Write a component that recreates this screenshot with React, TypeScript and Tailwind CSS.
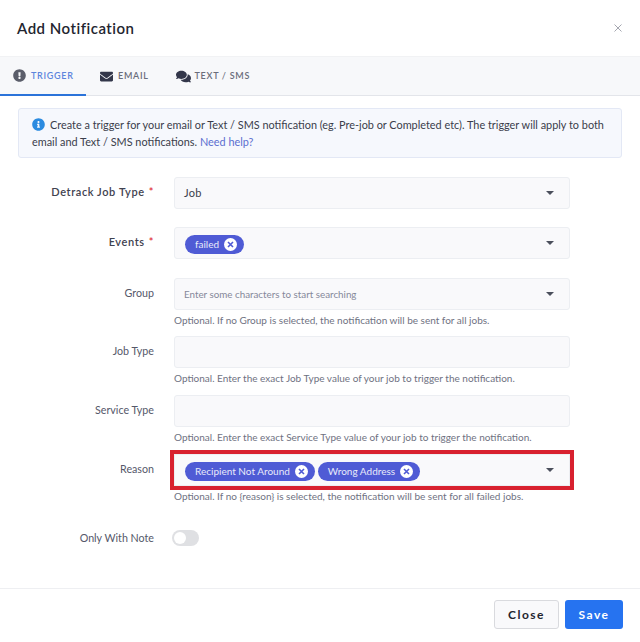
import { FaComments, FaEnvelope, FaExclamationCircle, FaInfoCircle } from "react-icons/fa";

function Caret() {
  return (
    <svg width="8" height="4" viewBox="0 0 8 4" className="shrink-0">
      <path d="M0 0h8L4 4z" fill="#4b4f5c" />
    </svg>
  );
}

function Chip({ label }: { label: string }) {
  return (
    <span className="flex h-[19px] items-center gap-[5px] rounded-full bg-[#4f5bd5] pl-[10px] pr-[7px] text-[10px] text-[#e8eafa]">
      {label}
      <span className="flex h-[13px] w-[13px] items-center justify-center rounded-full bg-white">
        <svg width="7" height="7" viewBox="0 0 7 7">
          <path d="M1 1l5 5M6 1L1 6" stroke="#4f5bd5" strokeWidth="1.6" />
        </svg>
      </span>
    </span>
  );
}

function Field({
  children,
  caret,
  highlight,
}: {
  children?: React.ReactNode;
  caret?: boolean;
  highlight?: boolean;
}) {
  return (
    <div
      className={`flex h-[32px] items-center justify-between border border-[#eceef2] bg-[#f9f9fb] pl-[9px] pr-[15px] ${
        highlight ? "rounded-none outline-[4px] outline-[#d8212f]" : "rounded-[3px]"
      }`}
    >
      <div className="flex items-center gap-[3px]">{children}</div>
      {caret && <Caret />}
    </div>
  );
}

function Row({
  label,
  required,
  help,
  children,
  className,
}: {
  label: string;
  required?: boolean;
  help?: string;
  children: React.ReactNode;
  className?: string;
}) {
  return (
    <div className={`flex ${className ?? ""}`}>
      <div
        className={`w-[154px] shrink-0 pt-[7px] text-right ${
          required ? "text-[11px] font-semibold tracking-[0.6px] text-[#3f4250]" : "text-[10.7px] text-[#55586a]"
        }`}
      >
        {label}
        {required && <span className="ml-[4px] text-[#e0323c]">*</span>}
      </div>
      <div className="ml-[20px] w-[396px]">
        {children}
        {help && <p className="mt-[4px] text-[10px] leading-[12px] text-[#6f7282]">{help}</p>}
      </div>
    </div>
  );
}

export default function App() {
  return (
    <div className="flex h-[642px] w-[640px] flex-col bg-white font-['Lato',sans-serif]">
      <div className="flex h-[56px] shrink-0 items-center justify-between pl-[17px] pr-[18px]">
        <h1 className="text-[15px] font-semibold tracking-[0.5px] text-[#23252f]">Add Notification</h1>
        <svg width="8" height="8" viewBox="0 0 8 8">
          <path d="M0.5 0.5l7 7M7.5 0.5l-7 7" stroke="#a5a7b0" strokeWidth="1" />
        </svg>
      </div>

      <div className="flex h-[40px] shrink-0 border-y border-t-[#f1f2f4] border-b-[#e3e5ea] bg-[#f7f8fa] text-[9px] font-semibold tracking-[0.7px]">
        <div className="-mb-px flex w-[86px] items-center gap-[5px] border-b-2 border-[#2b73d9] pl-[13px] text-[#5c85dd]">
          <FaExclamationCircle className="text-[13px] text-[#5b5e6a]" />
          TRIGGER
        </div>
        <div className="ml-[14px] flex items-center gap-[5px] text-[#6a6d7b]">
          <FaEnvelope className="text-[13px] text-[#33374a]" />
          EMAIL
        </div>
        <div className="ml-[27px] flex items-center gap-[4px] text-[#6a6d7b]">
          <FaComments className="text-[15px] text-[#33374a]" />
          TEXT / SMS
        </div>
      </div>

      <div className="mx-[18px] mt-[12px] h-[50px] rounded-[3px] border border-[#e3e8f5] bg-[#f6f8fd] px-[13px] pt-[7px] text-[10.88px] leading-[17px] text-[#3a3d4b]">
        <FaInfoCircle className="mr-[5px] inline-block align-[-2px] text-[13px] text-[#2b8be0]" />
        Create a trigger for your email or Text / SMS notification (eg. Pre-job or Completed etc). The trigger will apply to both email and Text / SMS notifications.{" "}
        <span className="text-[#5b6fd0]">Need help?</span>
      </div>

      <Row label="Detrack Job Type" required className="mt-[19px]">
        <Field caret>
          <span className="text-[11px] tracking-[0.25px] text-[#3a3d4b]">Job</span>
        </Field>
      </Row>
      <Row label="Events" required className="mt-[18px]">
        <Field caret>
          <span className="ml-[1px] pt-[2px]">
            <Chip label="failed" />
          </span>
        </Field>
      </Row>
      <Row label="Group" help="Optional. If no Group is selected, the notification will be sent for all jobs." className="mt-[19px]">
        <Field caret>
          <span className="text-[9.8px] text-[#85889a]">Enter some characters to start searching</span>
        </Field>
      </Row>
      <Row label="Job Type" help="Optional. Enter the exact Job Type value of your job to trigger the notification." className="mt-[10px]">
        <Field />
      </Row>
      <Row label="Service Type" help="Optional. Enter the exact Service Type value of your job to trigger the notification." className="mt-[11px]">
        <Field />
      </Row>
      <Row label="Reason" help="Optional. If no {reason} is selected, the notification will be sent for all failed jobs." className="mt-[11px]">
        <Field caret highlight>
          <span className="ml-[1px] flex gap-[3px] pt-[2px]">
            <Chip label="Recipient Not Around" />
            <Chip label="Wrong Address" />
          </span>
        </Field>
      </Row>

      <div className="mt-[28px] flex items-center">
        <div className="w-[154px] text-right text-[10.7px] text-[#55586a]">Only With Note</div>
        <div className="ml-[18px] flex h-[16px] w-[27px] items-center rounded-full bg-[#dfe0e3] pl-[2px]">
          <span className="h-[12px] w-[12px] rounded-full bg-white" />
        </div>
      </div>

      <div className="mt-auto flex h-[54px] justify-end gap-[6px] border-t border-[#eeeff2] pr-[17px] pt-[11px]">
        <button className="h-[29px] w-[65px] rounded-[3px] border border-[#d9dade] bg-[#f9f9fb] text-[12px] font-bold tracking-[1.5px] text-[#23252f]">
          Close
        </button>
        <button className="h-[29px] w-[58px] rounded-[3px] bg-[#2673f0] text-[12px] font-bold tracking-[1.5px] text-white">
          Save
        </button>
      </div>
    </div>
  );
}
